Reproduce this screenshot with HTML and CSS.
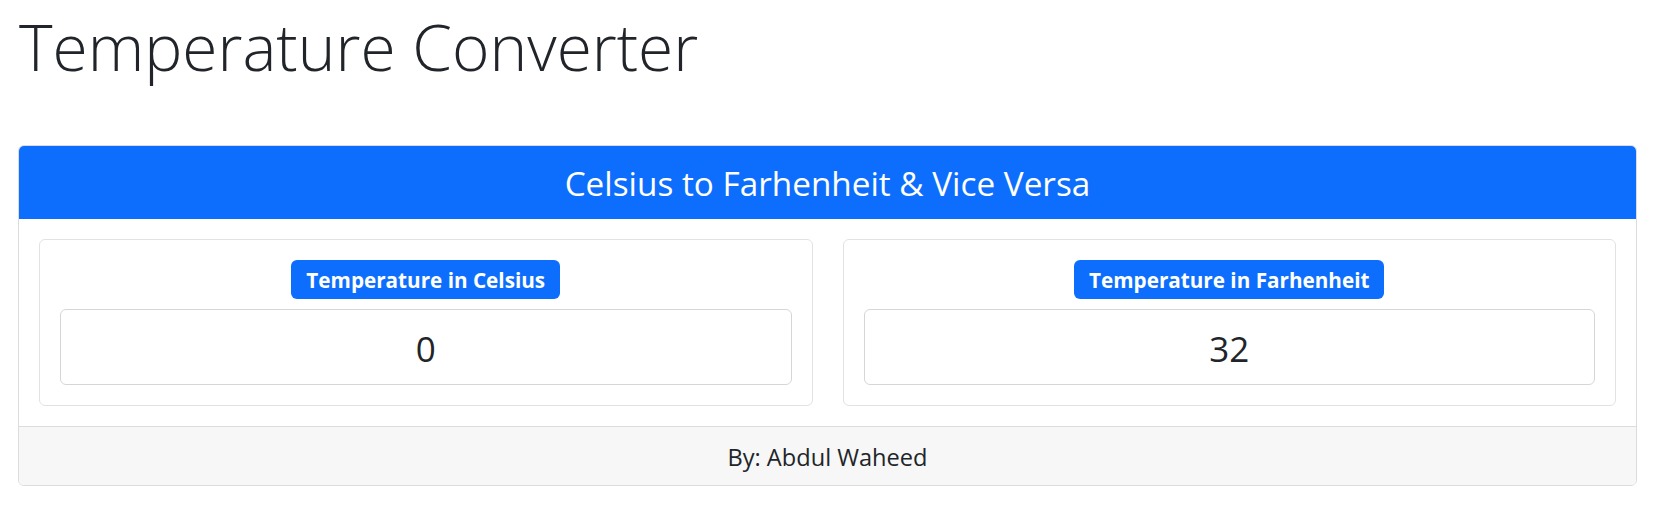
FILE: index.html
```html
<!DOCTYPE html>
<html lang="en">
<head>
<meta charset="utf-8">
<title>Temperature Converter</title>
<link rel="stylesheet" href="styles.css">
</head>
<body>
<div class="page">
  <h1 class="title">Temperature Converter</h1>
  <div class="card">
    <div class="card-header">Celsius to Farhenheit &amp; Vice Versa</div>
    <div class="card-body">
      <div class="panel">
        <span class="badge">Temperature in Celsius</span>
        <input class="field" type="text" value="0">
      </div>
      <div class="panel">
        <span class="badge">Temperature in Farhenheit</span>
        <input class="field" type="text" value="32">
      </div>
    </div>
    <div class="card-footer">By: Abdul Waheed</div>
  </div>
</div>
</body>
</html>
```

FILE: styles.css
```css
* { box-sizing: border-box; }
html, body { margin: 0; padding: 0; background: #fff; }
body {
  font-family: "Open Sans", "Noto Sans", "Liberation Sans", sans-serif;
  color: #212529;
}
.page {
  padding: 2px 22px 0 18px;
}
.title {
  margin: 0 0 53px 0;
  padding-left: 1px;
  font-weight: 300;
  font-size: 64px;
  line-height: 90px;
  color: #212529;
  white-space: nowrap;
}
.card {
  border: 1px solid #dcdcdc;
  border-radius: 6px;
  overflow: hidden;
  background: #fff;
}
.card-header {
  height: 73px;
  background: #0d6efd;
  color: #fff;
  display: flex;
  align-items: center;
  justify-content: center;
  font-size: 33.3px;
  font-weight: 400;
  padding-top: 1px;
}
.card-body {
  padding: 20px;
  display: grid;
  grid-template-columns: 1fr 1fr;
  column-gap: 30px;
}
.panel {
  border: 1px solid #e2e2e2;
  border-radius: 6px;
  padding: 20px;
  display: flex;
  flex-direction: column;
  align-items: center;
}
.badge {
  height: 39px;
  padding: 0 15px;
  display: inline-flex;
  align-items: center;
  background: #0d6efd;
  color: #fff;
  font-weight: 700;
  font-size: 20.7px;
  border-radius: 6px;
  margin-bottom: 10px;
  white-space: nowrap;
}
.field {
  width: 100%;
  height: 76px;
  border: 1px solid #d6d6d6;
  border-radius: 6px;
  font-family: inherit;
  font-size: 35px;
  color: #212529;
  text-align: center;
  padding: 0 12px;
  padding-top: 3px;
  background: #fff;
  outline: none;
}
.card-footer {
  height: 59px;
  border-top: 1px solid #dcdcdc;
  background: #f7f7f7;
  display: flex;
  align-items: center;
  justify-content: center;
  font-size: 23.6px;
  padding-top: 1px;
}
```
